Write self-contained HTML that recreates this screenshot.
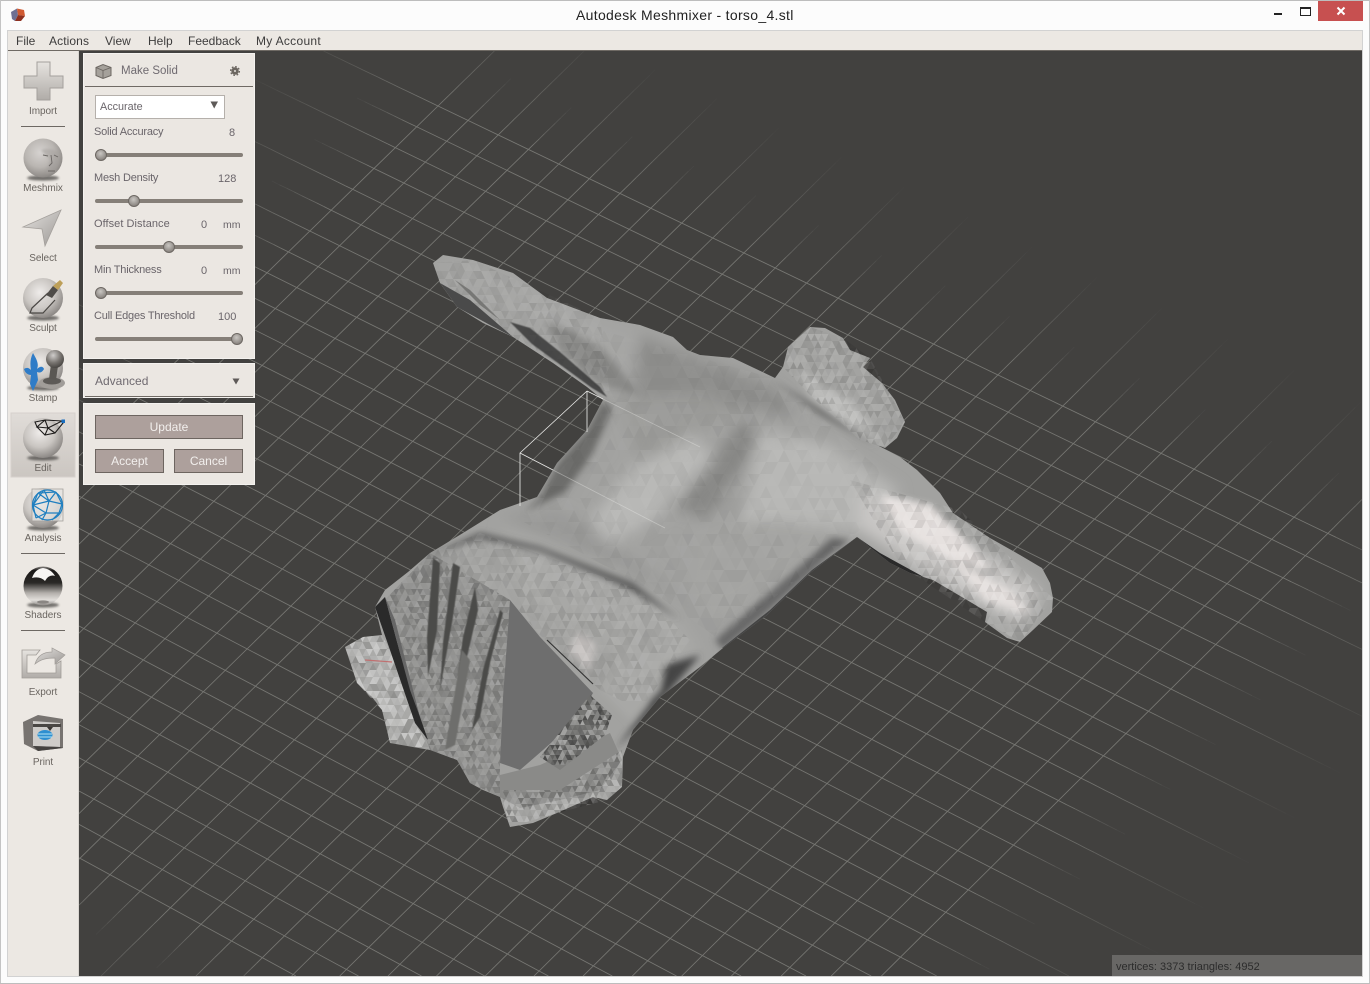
<!DOCTYPE html>
<html><head><meta charset="utf-8"><title>Autodesk Meshmixer - torso_4.stl</title>
<style>
html,body{margin:0;padding:0;background:#fcfcfc;width:1370px;height:984px;overflow:hidden}
body{position:relative;font-family:"Liberation Sans",sans-serif;color:#6a656a}
.a{position:absolute}
.t{position:absolute;white-space:nowrap;line-height:16px;font-size:11px}
.p{position:absolute;left:83px;width:170px;background:#ebe7e2;border:1px solid #f4f2ef}
.m{position:absolute;top:33px;font-size:12px;line-height:16px;color:#3d3c3c;white-space:nowrap}
.l{position:absolute;width:70px;left:8px;text-align:center;font-size:10px;line-height:14px;color:#6a6560;letter-spacing:-.05px}
.tr{position:absolute;left:95px;width:148px;height:4px;background:#857f78;border-radius:2px}
.k{position:absolute;width:12px;height:12px;border-radius:50%;background:radial-gradient(circle at 45% 35%,#c9c6c2,#8a8580 75%);border:1px solid #6d6863;box-sizing:border-box}
.b{position:absolute;background:#ada09c;border:1px solid #6d6560;box-sizing:border-box;color:#f2efed;font-size:12px;text-align:center;line-height:23px}
</style></head><body>
<div class="a" style="left:0;top:0;width:1370px;height:1px;background:#bdbdbd"></div>
<div class="a" style="left:0;top:0;width:1px;height:984px;background:#c4c4c4"></div>
<div class="a" style="left:1369px;top:0;width:1px;height:984px;background:#c4c4c4"></div>
<div class="a" style="left:0;top:983px;width:1370px;height:1px;background:#bdbdbd"></div>
<div class="t" style="left:576px;top:7px;font-size:14px;color:#222;letter-spacing:.31px">Autodesk Meshmixer - torso_4.stl</div>
<div class="a" style="left:1318px;top:1px;width:45px;height:20px;background:#c75050"></div>
<div class="a" style="left:1274px;top:13px;width:8px;height:2px;background:#222"></div>
<div class="a" style="left:1300px;top:7px;width:11px;height:9px;border:1px solid #222;border-top-width:2px;box-sizing:border-box"></div>
<svg class="a" style="left:1336px;top:6px" width="10" height="10" viewBox="0 0 10 10"><path d="M1.5 1.5L8.5 8.5M8.5 1.5L1.5 8.5" stroke="#fff" stroke-width="2"/></svg>
<svg class="a" style="left:10px;top:7px" width="16" height="16" viewBox="0 0 16 16"><path d="M1 5L7 1.5 8 8 5 14 2 12z" fill="#6d6f93"/><path d="M7 1.5L14 3 15 9 8 8z" fill="#d05a32"/><path d="M8 8L15 9 11 14 5 14z" fill="#8e3020"/></svg>

<div class="a" style="left:7px;top:30px;width:1356px;height:947px;background:#ece8e3;border:1px solid #d2d2d2;box-sizing:border-box"></div>
<div class="m" style="left:16px">File</div><div class="m" style="left:49px;letter-spacing:.1px">Actions</div><div class="m" style="left:105px">View</div><div class="m" style="left:148px">Help</div><div class="m" style="left:188px">Feedback</div><div class="m" style="left:256px;letter-spacing:.3px">My Account</div>
<div class="a" style="left:8px;top:50px;width:1354px;height:1px;background:#6f6a64"></div>

<svg id="v" class="a" style="left:0;top:0;overflow:hidden" width="1370" height="984" viewBox="0 0 1370 984">
<defs>
<clipPath id="vc"><rect x="79" y="51" width="1283" height="925"/></clipPath>
<clipPath id="body"><path id="sil" d="M433 263L443 255 473 260 513 273 547 298 600 318 640 325 673 337 687 350 700 355 733 358 775 378 783 367 788 347 810 327 825 328 843 338 850 350 870 358 863 367 882 383 895 400 905 422 897 438 885 448 877 445 900 457 917 470 940 493 953 513 990 538 1020 555 1042 568 1050 583 1053 598 1052 612 1033 630 1020 642 1007 638 985 622 987 612 967 600 933 580 910 573 890 563 857 537 810 573 767 615 723 648 700 667 660 697 633 730 623 757 622 787 607 800 593 797 557 813 533 823 510 827 503 807 500 797 483 790 470 783 457 760 430 750 390 743 382 710 372 697 357 683 345 647 363 637 382 635 375 607 385 590 408 572 430 553 463 533 500 510 537 497 557 463 587 430 603 400 587 387 553 363 513 337 483 323 457 307 440 283z"/></clipPath>
<clipPath id="c1"><path d="M378 607L430 553 510 600 503 697 500 763 500 797 470 783 457 760 430 750z"/></clipPath>
<clipPath id="c2"><path d="M345 647L363 637 382 635 390 650 415 723 430 750 390 743 382 710 357 683z"/></clipPath>
<clipPath id="c3"><path d="M500 790L560 790 622 750 622 787 607 800 557 813 510 827z"/></clipPath>
<clipPath id="c4"><path d="M783 367L788 347 810 327 843 338 870 358 905 422 885 448 860 440 810 395z"/></clipPath>
<clipPath id="c5"><path d="M850 480L960 510 1053 598 1020 642 985 622 900 565z"/></clipPath>
<clipPath id="c6"><path d="M430 553L480 533 640 590 690 640 640 710 600 690 540 635 510 600z"/></clipPath>
<clipPath id="c7"><path d="M433 263L473 260 600 318 610 395 513 337 440 283z"/></clipPath>
<clipPath id="c8"><path d="M600 330L780 380 880 470 860 530 720 640 650 590 520 520 600 420z"/></clipPath>
<clipPath id="c9"><path d="M540 757L590 695 612 715 605 735 560 770z"/></clipPath>
<filter id="b8" x="-30%" y="-30%" width="160%" height="160%"><feGaussianBlur stdDeviation="7"/></filter>
<filter id="b4" x="-30%" y="-30%" width="160%" height="160%"><feGaussianBlur stdDeviation="3.5"/></filter>
<filter id="b2" x="-30%" y="-30%" width="160%" height="160%"><feGaussianBlur stdDeviation="1.5"/></filter>
<filter id="b1" x="-30%" y="-30%" width="160%" height="160%"><feGaussianBlur stdDeviation="1"/></filter>
<filter id="b05" x="-30%" y="-30%" width="160%" height="160%"><feGaussianBlur stdDeviation=".5"/></filter>
<radialGradient id="sp" cx=".42" cy=".36" r=".68"><stop offset="0" stop-color="#efecea"/><stop offset=".55" stop-color="#c9c5c1"/><stop offset="1" stop-color="#85817e"/></radialGradient>
<radialGradient id="ball" cx=".4" cy=".3" r=".7"><stop offset="0" stop-color="#cfcdcb"/><stop offset=".6" stop-color="#77736f"/><stop offset="1" stop-color="#4a4744"/></radialGradient>
<linearGradient id="cr" x1="0" y1="0" x2="0" y2="1"><stop offset="0" stop-color="#e6e3df"/><stop offset="1" stop-color="#b0aca8"/></linearGradient>
<linearGradient id="ar" x1="0" y1="0" x2="1" y2="1"><stop offset="0" stop-color="#e4e2df"/><stop offset="1" stop-color="#9c9895"/></linearGradient>
<linearGradient id="sh" x1="0" y1="0" x2="0" y2="1"><stop offset="0" stop-color="#8a8682"/><stop offset=".1" stop-color="#1a1817"/><stop offset=".42" stop-color="#2a2826"/><stop offset=".68" stop-color="#b3afab"/><stop offset=".86" stop-color="#e2dfdb"/><stop offset="1" stop-color="#8a8683"/></linearGradient>
<linearGradient id="ed" x1="0" y1="0" x2="0" y2="1"><stop offset="0" stop-color="#e0dcd8"/><stop offset="1" stop-color="#cbc6c1"/></linearGradient>
</defs>
<rect x="79" y="51" width="1283" height="925" fill="#42413f"/>
<g id="grid" clip-path="url(#vc)" stroke="#777773" stroke-width=".85" fill="none"></g>

<!-- mesh -->
<g clip-path="url(#body)">
<rect x="340" y="250" width="720" height="580" fill="#a2a2a0"/>
<g filter="url(#b8)">
<path d="M440 262L520 276 600 322 680 345 640 380 600 370 540 330 470 300z" fill="#a6a6a4"/>
<path d="M640 335L700 358 770 385 800 415 740 410 680 400 630 410z" fill="#8e8e8c"/>
<path d="M590 520L635 465 690 435 715 455 660 515 610 545z" fill="#b8b8b6"/>
<path d="M675 510L708 470 738 425 760 425 742 468 705 518z" fill="#868684"/>
<path d="M620 400L700 395 745 410 700 430 640 465z" fill="#9c9c9a"/>
<path d="M760 430L830 445 900 490 860 530 790 555 740 530z" fill="#b8b8b6"/>
<path d="M700 530L770 520 850 530 790 575 720 620 690 590z" fill="#a4a4a2"/>
<path d="M860 490L930 520 1040 590 1020 625 930 575 860 530z" fill="#c8c6c4"/>
<path d="M500 530L580 545 660 590 700 650 640 690 600 640 520 590z" fill="#a8a8a6"/>
<path d="M500 515L560 510 650 570 690 610 620 570 540 535z" fill="#989896"/>
</g>
<g filter="url(#b4)">
<path d="M603 400L612 410 592 455 565 492 525 512 540 497 558 463 587 430z" fill="#5e5e5d" opacity=".8"/>
<path d="M417 560L480 533 540 547 633 583 680 620 628 588 540 551 480 538z" fill="#505050"/>
<path d="M723 650L770 610 830 555 850 540 832 538 768 594 715 640z" fill="#686867"/>
<path d="M700 655L665 665 648 705 615 750 640 725 665 697z" fill="#444"/>
<path d="M640 600L670 640 660 690 630 720 600 690 620 650z" fill="#a8a8a6"/>
<path d="M880 495L930 505 965 540 990 570 950 560 900 530z" fill="#e6e1df"/>
<path d="M950 560L1010 590 1030 615 985 600z" fill="#e4dfdd"/>
<path d="M578 632L596 644 590 672 568 652z" fill="#c8c4c2"/>
<path d="M800 370L850 400 880 440 850 430 810 395z" fill="#bcbcba"/>
<path d="M770 378L840 420 876 446 820 415z" fill="#6a6a69"/>
<path d="M545 320L600 345 640 395 600 385 560 350z" fill="#888886"/>
</g>
</g>
<g id="tx"></g>
<g clip-path="url(#body)">
<path d="M378 607L430 553 510 600 503 697 500 763 500 797 470 783 457 760 430 750z" fill="#000" opacity=".1"/>
<path d="M510 600L540 637 593 693 580 717 543 750 520 770 500 763 503 697z" fill="#6e6e6e"/>
<path d="M500 797L500 775 540 765 585 745 610 733 622 760 600 790 560 800 520 808z" fill="#8a8a88"/>
<path id="zz" d="M540 757L590 695 612 715 605 735 560 770z" fill="#7e7e7c"/>
<g fill="#4c4c4a" filter="url(#b05)">
<path d="M433 558L440 563 437 630 428 677 427 637z"/>
<path d="M453 563L460 567 453 617 440 690 443 643z"/>
<path d="M475 587L478 610 467 657 457 680 463 637z"/>
<path d="M500 610L503 613 490 663 480 717 472 730 483 670z"/>
<path d="M462 650L470 660 455 745 445 750z" fill="#6e6e6c"/>
</g>
<path d="M547 640L570 662 593 684" stroke="#333" stroke-width="1.2" fill="none"/>
<path d="M375 607L385 597 400 653 420 717 428 740 415 723 390 650z" fill="#2a2a2a"/>
<path d="M385 597L395 620 420 717 410 690z" fill="#666"/>
<path d="M510 322L530 328 560 352 600 387 607 397 592 388 562 366 532 344z" fill="#333" opacity=".8" filter="url(#b05)"/>
<path d="M440 283L470 300 513 337 490 325 457 307z" fill="#4a4a4a"/>
<path d="M455 280L470 290 500 320 480 305z" fill="#777775"/>
<path d="M857 537L880 553 920 575 985 612 967 606 900 575 870 555z" fill="#2a2a2a"/>
<path d="M722 648L770 610 812 570 857 537 840 556 775 615 735 645z" fill="#444"/>
<path d="M365 660L392 662" stroke="#c07070" stroke-width="1.2" fill="none"/>
</g>
<g id="tx2"></g>
<g fill="none" stroke="#e8e8e6" clip-path="url(#vc)" stroke-width=".85">
<path d="M587 391L520 453V506M587 391V432"/>
<path d="M587 391L603 399"/><path d="M520 453L553 470"/>
<path d="M603 399L700 447" opacity=".4"/>
<path d="M553 470L665 528" opacity=".4"/>
</g>

<!-- toolbar -->
<rect x="78" y="51" width="1" height="925" fill="#d9d5d0"/>
<rect x="11" y="413" width="64" height="64" fill="url(#ed)" stroke="#d6d1cc"/>
<g fill="#6d6863"><rect x="21" y="126" width="44" height="1"/><rect x="21" y="553" width="44" height="1"/><rect x="21" y="630" width="44" height="1"/></g>
<!-- import -->
<path d="M37 62H50V76H63V88H50V100H37V88H24V76H37Z" fill="url(#cr)" stroke="#a4a09c"/>
<!-- shadows -->
<g fill="#4a4744" filter="url(#b1)" opacity=".75"><ellipse cx="43" cy="178" rx="16" ry="2.6"/><ellipse cx="43" cy="318" rx="16" ry="2.6"/><ellipse cx="43" cy="388" rx="16" ry="2.6"/><ellipse cx="43" cy="458" rx="16" ry="2.6"/><ellipse cx="43" cy="528" rx="16" ry="2.6"/><ellipse cx="43" cy="605" rx="16" ry="2.6"/></g>
<!-- meshmix -->
<circle cx="43" cy="158" r="19.5" fill="url(#sp)"/>
<circle cx="43" cy="158" r="19.5" fill="#8a8683" opacity=".25"/>
<path d="M41 150Q50 147 58 152L60 162 56 172 46 174 48 166 50 160 47 156z" fill="#a5a19e" opacity=".55" filter="url(#b1)"/>
<path d="M43 155L48 156M54 155L58 157M51 155L52 163 49 166M48 171L55 171" stroke="#6a6663" stroke-width=".9" fill="none"/>
<!-- select -->
<path d="M23 227L61 210 45 246 42 229z" fill="url(#ar)" stroke="#a4a09c" stroke-width=".8"/>
<!-- sculpt -->
<circle cx="43" cy="298" r="20" fill="url(#sp)"/>
<path d="M48 293L32 308 30 313 43 313 55 300" fill="#d8d5d2" fill-opacity=".4" stroke="#4a4744" stroke-width="1.2"/>
<path d="M46 295L53 286 58 290 52 298z" fill="#4f4c49"/>
<path d="M53 286L60 280 63 283 58 290z" fill="#bd9f58"/>
<!-- stamp -->
<circle cx="43" cy="368" r="20" fill="url(#sp)"/>
<path d="M33 353C37 360 39 364 37 369 40 366 43 366 44 369 42 373 39 373 37 372L38 380 33 391 30 384 31 375C28 375 25 373 24 369 27 367 29 368 31 370 30 364 30 359 33 353Z" fill="#2f7cc7"/>
<ellipse cx="52" cy="383" rx="13" ry="6" fill="#a19d99"/><ellipse cx="52" cy="381" rx="9" ry="3.5" fill="#5d5a57"/>
<path d="M51 364L58 366 56 380 49 379z" fill="#5a5753"/>
<circle cx="55" cy="359" r="9" fill="url(#ball)"/>
<!-- edit -->
<circle cx="43" cy="438" r="20" fill="url(#sp)"/>
<path d="M35 422L45 420 62 421 63 423 55 433 45 435 37 427zM45 420L37 427 48 428 45 435M48 428L62 421M48 428L55 433M45 420L48 428" fill="none" stroke="#1e1c1b" stroke-width="1.1"/>
<rect x="61.5" y="419.5" width="3.5" height="3.5" fill="#1a6fc0"/>
<!-- analysis -->
<circle cx="43" cy="508" r="20" fill="url(#sp)"/>
<rect x="32" y="489" width="31" height="32" fill="#e6e4e1" fill-opacity=".75" stroke="#a5a19d" stroke-width=".8"/>
<circle cx="47.5" cy="505" r="15" fill="none" stroke="#1f7fc0" stroke-width="1.2"/>
<path d="M38 493L49 501 56 492M49 501L62 504M49 501L46 513 36 518M46 513L59 513 62 504M38 493L33 505 36 518M33 505L49 501M46 513L42 520M59 513L52 520M44 490L33 505M38 493L56 492M44 490L49 501M56 492L62 504M33 505L46 513" fill="none" stroke="#1f7fc0" stroke-width="1.2"/>
<!-- shaders -->
<circle cx="43" cy="586" r="19.5" fill="url(#sh)"/>
<path d="M32 578Q35 569 43 568 51 569 55 576 49 574 45 581 40 576 32 578Z" fill="#f7f5f3"/>
<ellipse cx="43" cy="602" rx="6" ry="1.6" fill="#8a8683"/>
<!-- export -->
<path d="M22 650H40L36 655H27V673H56V664L61 661V678H22Z" fill="url(#cr)" stroke="#a09c98" stroke-width=".8"/>
<path d="M35 664C38 654 46 652 52 652V648L65 655 55 664V658C47 658 41 659 35 664Z" fill="url(#ar)" stroke="#a09c98" stroke-width=".7"/>
<!-- print -->
<path d="M23 722L38 715 63 719V748L38 751 24 744Z" fill="#777370"/>
<path d="M33 721L60 723V747L33 746Z" fill="#cfccc9"/>
<rect x="33" y="724" width="28" height="3" fill="#4a4744"/>
<path d="M47 727L50 731 53 727Z" fill="#3a3734"/>
<ellipse cx="45" cy="735" rx="7.5" ry="5" fill="#2e8fd0"/>
<path d="M38 734H52M38 737H52" stroke="#dff" stroke-width=".8"/>
<path d="M33 746L60 747 63 748 38 751Z" fill="#454240"/>
</svg>

<div class="l" style="top:105px">Import</div>
<div class="l" style="top:182px">Meshmix</div>
<div class="l" style="top:252px">Select</div>
<div class="l" style="top:322px">Sculpt</div>
<div class="l" style="top:392px">Stamp</div>
<div class="l" style="top:462px">Edit</div>
<div class="l" style="top:532px">Analysis</div>
<div class="l" style="top:609px">Shaders</div>
<div class="l" style="top:686px">Export</div>
<div class="l" style="top:756px">Print</div>

<div class="p" style="top:53px;height:304px"></div>
<div class="p" style="top:363px;height:33px"></div>
<div class="p" style="top:403px;height:80px"></div>
<div class="a" style="left:85px;top:86px;width:168px;height:1px;background:#6f6a64"></div>
<div class="a" style="left:85px;top:396px;width:168px;height:1px;background:#6f6a64"></div>
<svg class="a" style="left:90px;top:60px" width="160" height="22" viewBox="90 60 160 22">
<path d="M96 67.5L103 64.5 111 67.5V75.5L103 78.5 96 75.5Z" fill="#a5a19b" stroke="#6d6863"/>
<path d="M96 67.5L103 70.5 111 67.5M103 70.5V78.5" fill="none" stroke="#6d6863" stroke-width=".9"/>
<circle cx="235" cy="71" r="3.7" fill="#6b6660"/><circle cx="235" cy="71" r="4.4" fill="none" stroke="#6b6660" stroke-width="1.3" stroke-dasharray="1.7 1.75"/><circle cx="235" cy="71" r="1.1" fill="#d0ccc7"/>
</svg>
<div class="t" style="left:121px;top:63px;font-size:11.5px;line-height:17px;color:#6f6a70">Make Solid</div>
<div class="a" style="left:95px;top:95px;width:130px;height:24px;background:#fff;border:1px solid #b5b0ab;box-sizing:border-box"></div>
<div class="t" style="left:100px;top:100px;font-size:10.8px;line-height:15px">Accurate</div>
<svg class="a" style="left:210px;top:101px" width="9" height="8"><path d="M0.5 0.5H8L4.2 7.5Z" fill="#5e5a58"/></svg>

<div class="t" style="left:94px;top:124px;letter-spacing:-.2px">Solid Accuracy</div><div class="t" style="left:229px;top:125px">8</div>
<div class="tr" style="top:153px"></div><div class="k" style="left:95px;top:149px"></div>
<div class="t" style="left:94px;top:170px;letter-spacing:-.2px">Mesh Density</div><div class="t" style="left:218px;top:171px">128</div>
<div class="tr" style="top:199px"></div><div class="k" style="left:128px;top:195px"></div>
<div class="t" style="left:94px;top:216px;letter-spacing:.05px">Offset Distance</div><div class="t" style="left:201px;top:217px">0</div><div class="t" style="left:223px;top:217px;font-size:10.5px">mm</div>
<div class="tr" style="top:245px"></div><div class="k" style="left:163px;top:241px"></div>
<div class="t" style="left:94px;top:262px;letter-spacing:-.2px">Min Thickness</div><div class="t" style="left:201px;top:263px">0</div><div class="t" style="left:223px;top:263px;font-size:10.5px">mm</div>
<div class="tr" style="top:291px"></div><div class="k" style="left:95px;top:287px"></div>
<div class="t" style="left:94px;top:308px;letter-spacing:-.2px">Cull Edges Threshold</div><div class="t" style="left:218px;top:309px">100</div>
<div class="tr" style="top:337px"></div><div class="k" style="left:231px;top:333px"></div>

<div class="t" style="left:95px;top:373px;font-size:12px;color:#6f6a70">Advanced</div>
<svg class="a" style="left:232px;top:378px" width="8" height="7"><path d="M0.5 0.5H7.5L4 6.5Z" fill="#5e5a58"/></svg>
<div class="b" style="left:95px;top:415px;width:148px;height:24px">Update</div>
<div class="b" style="left:95px;top:449px;width:69px;height:24px">Accept</div>
<div class="b" style="left:174px;top:449px;width:69px;height:24px">Cancel</div>

<div class="a" style="left:1112px;top:955px;width:250px;height:21px;background:#686765"></div>
<div class="t" style="left:1116px;top:959px;font-size:11px;color:#2c2c2c">vertices: 3373 triangles: 4952</div>

<script>
(function(){
var NS="http://www.w3.org/2000/svg";
var src=[[0,0,143.3,660],[-6,22,438,106],[20,15,1104.3,656],[9,-5,306.7,914]];
var M=[];src.forEach(function(p){var m=p[0],n=p[1],x=p[2],y=p[3];
M.push([m,n,1,0,0,0,-m*x,-n*x,x]);M.push([0,0,0,m,n,1,-m*y,-n*y,y]);});
for(var i=0;i<8;i++){var b=i;for(var r=i+1;r<8;r++)if(Math.abs(M[r][i])>Math.abs(M[b][i]))b=r;
var s=M[i];M[i]=M[b];M[b]=s;for(var r2=0;r2<8;r2++){if(r2===i)continue;var f=M[r2][i]/M[i][i];for(var c=i;c<9;c++)M[r2][c]-=f*M[i][c];}}
var h=[];for(i=0;i<8;i++)h.push(M[i][8]/M[i][i]);
function P(m,n){var w=h[6]*m+h[7]*n+1;return[(h[0]*m+h[1]*n+h[2])/w,(h[3]*m+h[4]*n+h[5])/w];}
var g=document.getElementById("grid");
var X0=79,X1=1362,Y0=51,Y1=976;
function seg(a,b,o){
 if(o<=.02)return;
 var t0=0,t1=1,dx=b[0]-a[0],dy=b[1]-a[1];
 var ps=[-dx,dx,-dy,dy],qs=[a[0]-X0,X1-a[0],a[1]-Y0,Y1-a[1]];
 for(var k=0;k<4;k++){if(ps[k]===0){if(qs[k]<0)return;continue;}
  var q=qs[k]/ps[k];if(ps[k]<0){if(q>t0)t0=q;}else{if(q<t1)t1=q;}}
 if(t0>=t1)return;
 var l=document.createElementNS(NS,"line");
 l.setAttribute("x1",(a[0]+t0*dx).toFixed(1));l.setAttribute("y1",(a[1]+t0*dy).toFixed(1));
 l.setAttribute("x2",(a[0]+t1*dx).toFixed(1));l.setAttribute("y2",(a[1]+t1*dy).toFixed(1));
 if(o<1)l.setAttribute("opacity",o.toFixed(2));g.appendChild(l);}
function line(fn,lo,hi,extLo,extHi){
 seg(fn(lo),fn(hi),1);
 function tail(start,dir,ext){var st=.25;for(var t=0;t<ext;t+=st){var o=1-t/ext;seg(fn(start+dir*t),fn(start+dir*(t+st)),o);}}
 tail(lo,-1,extLo);tail(hi,1,extHi);
}
for(var n=-7;n<=22;n++){(function(n){var odd=Math.abs(n)%2===1;
 line(function(t){return P(t,n)},-6,22,odd?2:5,odd?5:2);})(n);}
for(var m=-6;m<=22;m++){(function(m){var ev=Math.abs(m)%2===0;
 line(function(t){return P(m,t)},-7,22,ev?5:2,ev?4.5:2);})(m);}
/* facet texture */
var seed=12345;function R(){seed=(seed*1103515245+12345)&0x7fffffff;return seed/0x7fffffff;}
function tex(par,id,x0,y0,x1,y1,st,amp,bias){var G=document.createElementNS(NS,"g");G.setAttribute("clip-path","url(#"+id+")");
 function add(pts){var v=R()-.5+bias;var p=document.createElementNS(NS,"path");p.setAttribute("d","M"+pts.map(function(q){return q[0].toFixed(1)+" "+q[1].toFixed(1)}).join("L")+"z");p.setAttribute("fill",v>0?"#fff":"#000");p.setAttribute("opacity",Math.min(.9,Math.abs(v)*amp).toFixed(2));G.appendChild(p);}
 for(var y=y0;y<y1;y+=st)for(var x=x0;x<x1;x+=st){var ox=Math.round((y-y0)/st)%2?st/2:0;
 add([[x+ox,y],[x+ox+st,y],[x+ox+st/2,y+st]]);add([[x+ox+st,y],[x+ox+st/2,y+st],[x+ox+st*1.5,y+st]]);}
 document.getElementById(par).appendChild(G);}
tex("tx","c8",520,330,880,640,12,.06,.0);
tex("tx","c7",433,255,610,390,8,.14,.0);
tex("tx","c6",430,533,690,700,8,.16,.0);
tex("tx","c1",375,553,510,790,6,.34,.0);
tex("tx","c2",345,635,430,745,7,.55,.3);
tex("tx","c4",783,327,905,440,7,.24,.05);
tex("tx","c5",850,480,1053,635,8,.26,.06);
tex("tx2","c3",500,750,622,820,6,.45,.05);
tex("tx2","c9",540,695,612,765,5,.75,-.05);
})();
</script>
</body></html>
